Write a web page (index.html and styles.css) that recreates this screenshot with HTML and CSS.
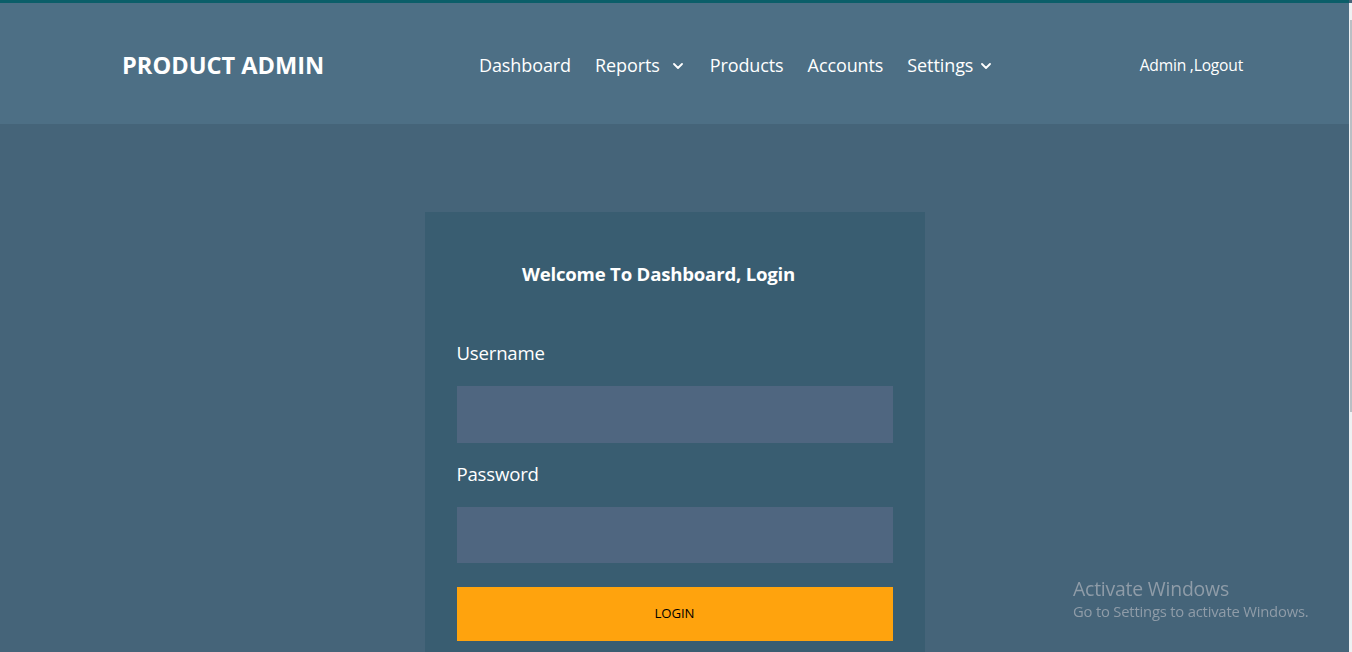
FILE: index.html
```html
<!DOCTYPE html>
<html lang="en">
<head>
<meta charset="utf-8">
<title>Product Admin - Login</title>
<link rel="stylesheet" href="styles.css">
</head>
<body>
<div class="topline"></div>
<header class="header">
  <div class="logo">PRODUCT ADMIN</div>
  <nav class="nav">
    <a class="nav-item">Dashboard</a>
    <a class="nav-item reports">Reports
      <svg class="chev chev-wide" viewBox="0 0 10 6" width="10" height="6"><path d="M1 1l4 4 4-4" fill="none" stroke="#fff" stroke-width="1.8" stroke-linecap="round" stroke-linejoin="round"/></svg>
    </a>
    <a class="nav-item">Products</a>
    <a class="nav-item">Accounts</a>
    <a class="nav-item settings">Settings
      <svg class="chev" viewBox="0 0 10 6" width="10" height="6"><path d="M1 1l4 4 4-4" fill="none" stroke="#fff" stroke-width="1.8" stroke-linecap="round" stroke-linejoin="round"/></svg>
    </a>
  </nav>
  <div class="user">Admin ,Logout</div>
</header>
<main class="main">
  <section class="card">
    <h2 class="card-title">Welcome To Dashboard, Login</h2>
    <form class="form">
      <label class="label">Username</label>
      <input class="input" type="text">
      <label class="label label-pw">Password</label>
      <input class="input" type="password">
      <button class="btn" type="button">LOGIN</button>
    </form>
  </section>
</main>
<div class="scrollbar"><div class="thumb"></div></div>
<div class="activate">
  <div class="act-title">Activate Windows</div>
  <div class="act-sub">Go to Settings to activate Windows.</div>
</div>
</body>
</html>
```

FILE: styles.css
```css
* { box-sizing: border-box; }
html, body { margin: 0; padding: 0; }
body {
  background: #456479;
  font-family: "Open Sans", "Noto Sans", sans-serif;
  color: #fff;
  height: 652px;
  overflow: hidden;
  width: 1349px;
}
.topline { height: 3px; background: #0b5e69; }
.header {
  height: 121px;
  background: #4d6f85;
  display: grid;
  grid-template-columns: 357px auto 1fr;
  align-items: center;
  padding: 2px 106px 0 122px;
}
.logo {
  font-weight: 700;
  font-size: 23.6px;
  line-height: 1;
  margin-top: 2px;
}
.nav {
  display: flex;
  align-items: center;
  gap: 24px;
}
.nav-item {
  font-size: 18px;
  line-height: 24px;
  display: flex;
  align-items: center;
  color: #fff;
  letter-spacing: -0.1px;
}
.chev { margin-left: 8px; margin-top: 2px; }
.chev-wide { margin-left: 13px; margin-right: 3px; }
.user {
  justify-self: end;
  font-size: 15.6px;
  letter-spacing: -0.2px;
}
.main {
  display: flex;
  justify-content: center;
  padding-top: 88px;
}
.card {
  width: 500px;
  background: #395d71;
  padding: 50px 32px 40px;
}
.card-title {
  margin: 0 32px 0 0;
  text-align: center;
  font-size: 18.6px;
  font-weight: 700;
  line-height: 24px;
  letter-spacing: -0.2px;
}
.form { display: flex; flex-direction: column; margin-top: 55px; }
.label {
  font-size: 18.6px;
  line-height: 24px;
  letter-spacing: -0.2px;
}
.label-pw { margin-top: 19px; }
.input {
  margin-top: 21px;
  height: 57px;
  border: 0;
  background: #4f6680;
  outline: none;
}
.input[type=password] { height: 56px; }
.btn {
  margin-top: 24px;
  height: 54px;
  padding: 0 0 2px;
  border: 0;
  background: #ffa30d;
  color: #000;
  font-family: "Open Sans", "Noto Sans", sans-serif;
  font-size: 13.2px;
  letter-spacing: -0.1px;
}
.scrollbar {
  position: fixed;
  top: 3px;
  right: 0;
  width: 3px;
  height: 649px;
  background: #eef1f3;
}
.thumb {
  margin-top: 17px;
  margin-left: 1px;
  width: 2px;
  height: 392px;
  background: #b9bfc4;
}
.activate {
  position: fixed;
  left: 1073px;
  top: 576px;
  color: #8f9ca8;
}
.act-title { font-size: 19.4px; line-height: 25px; letter-spacing: -0.2px; }
.act-sub { font-size: 14.8px; line-height: 20px; letter-spacing: -0.2px; }
```
